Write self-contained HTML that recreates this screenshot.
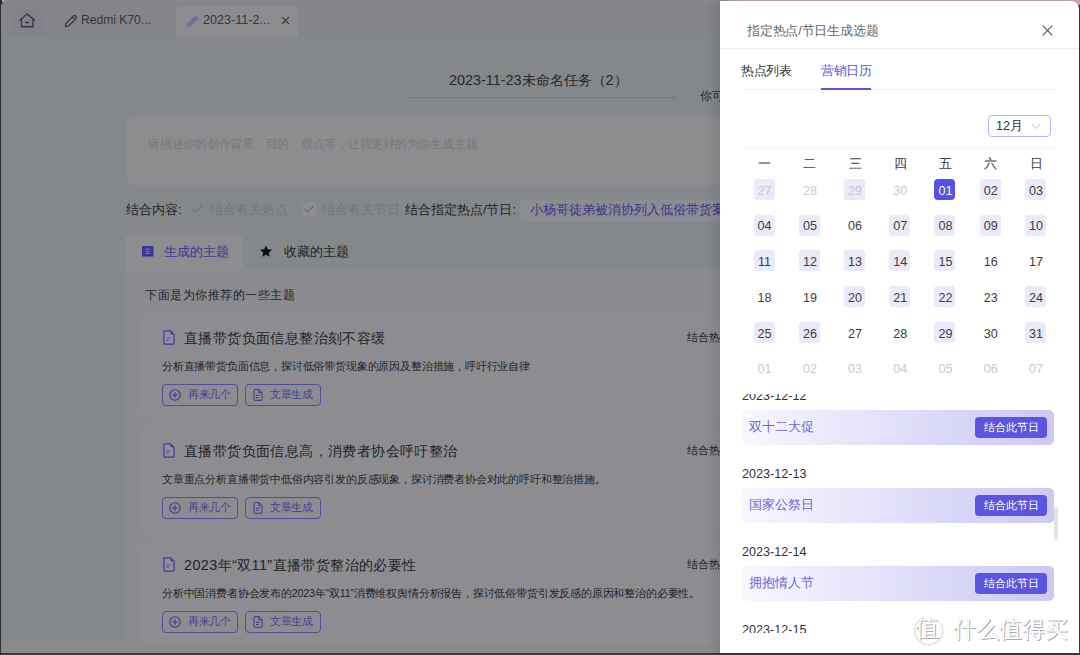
<!DOCTYPE html>
<html><head><meta charset="utf-8">
<style>
*{margin:0;padding:0;box-sizing:border-box}
html,body{width:1080px;height:655px;overflow:hidden;background:#3a3a3c;font-family:"Liberation Sans",sans-serif}
.abs{position:absolute}
.t{position:absolute;white-space:nowrap;line-height:1}
svg{position:absolute;overflow:visible}
</style></head><body>
<!-- outer frame -->
<div class="abs" style="left:0;top:0;width:1080px;height:2px;background:linear-gradient(90deg,#e0a0b8 0,#8e8690 8px,#8e8690 720px,#c0a8b4 740px,#c0a8b4 1070px,#e8a0b8 1080px)"></div>
<div class="abs" style="left:1074px;top:0;width:6px;height:5px;background:#d898b0"></div>
<div class="abs" style="left:0;top:0;width:1.5px;height:655px;background:#2e3033"></div>
<!-- left masked window -->
<div class="abs" id="left" style="left:1px;top:1px;width:719px;height:652px;background:#85888a;overflow:hidden;border-top-left-radius:6px">
  <!-- tab bar -->
  <div class="abs" style="left:0;top:0;width:719px;height:35px;background:#858488"></div>
  <div class="abs" style="left:11px;top:9px;width:32px;height:24px;border-radius:7px;background:#82828d"></div>
  <div class="abs" style="left:0;top:589px;width:124px;height:51px;background:#84878b"></div>
  <div class="abs" style="left:0;top:639px;width:719px;height:14px;background:#8a8a8c"></div>
  <div class="abs" style="left:175px;top:5px;width:122px;height:31px;border-radius:6px 6px 0 0;background:#8c8c8f"></div>
</div>
<div id="lt">
  <!-- home icon -->
  <svg style="left:18px;top:12px" width="18" height="17" viewBox="0 0 18 17"><path d="M2 8 L9.2 2 L16.4 8 M3.5 6.8 V14.7 H15 V6.8" fill="none" stroke="#34343c" stroke-width="1.35" stroke-linejoin="round" stroke-linecap="round"/><path d="M7.3 10.3 Q9.2 12.3 11.1 10.3 Z" fill="#34343c" stroke="#34343c" stroke-width="0.8"/></svg>
  <!-- pencil -->
  <svg style="left:64px;top:14px" width="14" height="14" viewBox="0 0 14 14"><path d="M1.5 12.5 L1.8 9.6 L9.6 1.8 Q10.4 1.1 11.2 1.8 L12.2 2.8 Q12.9 3.6 12.2 4.4 L4.4 12.2 Z M8.4 3 L11 5.6" fill="none" stroke="#3a3a42" stroke-width="1.3" stroke-linejoin="round"/></svg>
  <div class="t" style="left:81px;top:14px;font-size:12.1px;color:#36363c">Redmi K70...</div>
  <svg style="left:186px;top:15px" width="13" height="12" viewBox="0 0 13 12"><path d="M1.5 11 L1.8 8.4 L8.6 1.6 Q9.4 0.9 10.2 1.6 L11.2 2.6 Q11.9 3.4 11.2 4.2 L4.2 11 Z" fill="#73708f" stroke="#73708f" stroke-width="1"/></svg>
  <div class="t" style="left:203px;top:14px;font-size:12.6px;color:#36363c">2023-11-2...</div>
  <svg style="left:281px;top:16px" width="9" height="9" viewBox="0 0 9 9"><path d="M1 1 L8 8 M8 1 L1 8" stroke="#3a3a40" stroke-width="1.2"/></svg>
  <!-- title -->
  <div class="t" style="left:449px;top:73px;font-size:14.4px;color:#26262b">2023-11-23未命名任务（2）</div>
  <div class="abs" style="left:408px;top:97px;width:268px;height:1px;background:#76777b"></div>
  <div class="t" style="left:700px;top:91.2px;font-size:11.5px;color:#26262b">你可</div>
  <!-- textarea -->
  <div class="abs" style="left:126px;top:117px;width:600px;height:68px;border-radius:10px;background:#8d8d90"></div>
  <div class="t" style="left:148px;top:138px;font-size:12px;letter-spacing:-0.24px;color:#77777b">请描述你的创作背景、目的、观点等，让我更好的为你生成主题</div>
  <!-- checkbox row -->
  <div class="t" style="left:126px;top:204px;font-size:12.6px;color:#1f1f24">结合内容:</div>
  <svg style="left:191px;top:204px" width="12" height="10" viewBox="0 0 12 10"><path d="M1.5 5 L4.5 8 L10.5 2" fill="none" stroke="#737378" stroke-width="1.2"/></svg>
  <div class="t" style="left:210px;top:204px;font-size:12.6px;color:#75757a">结合有关热点</div>
  <div class="abs" style="left:302px;top:202px;width:15px;height:15px;border-radius:3px;background:#8e8e92;border:1px solid #8a8a8e"></div>
  <svg style="left:303px;top:204px" width="12" height="10" viewBox="0 0 12 10"><path d="M1.5 5 L4.5 8 L10.5 2" fill="none" stroke="#68686d" stroke-width="1.2"/></svg>
  <div class="t" style="left:322px;top:204px;font-size:12.6px;color:#75757a">结合有关节日</div>
  <div class="t" style="left:405px;top:204px;font-size:12.6px;color:#1f1f24">结合指定热点/节日:</div>
  <div class="abs" style="left:520px;top:199px;width:220px;height:23px;border-radius:4px;background:#8b8b92"></div>
  <div class="t" style="left:530px;top:204px;font-size:12.6px;color:#3d3590">小杨哥徒弟被消协列入低俗带货案例</div>

  <!-- tabs -->
    <div class="abs" style="left:125px;top:233px;width:118px;height:40px;border-radius:8px 8px 0 0;background:#8d8d90"></div>
  <div class="abs" style="left:125px;top:269px;width:600px;height:372px;background:#8b8b8f"></div>
  <svg style="left:142px;top:246px" width="11.5" height="10.5" viewBox="0 0 11.5 10.5"><rect x="0" y="0" width="11.5" height="10.5" fill="#3c3591"/><path d="M3 3H8.5 M3 5.25H8.5 M3 7.5H8.5 M5.75 2.2V8.3" stroke="#7e79b4" stroke-width="0.8"/></svg>
  <div class="t" style="left:164px;top:246px;font-size:12.6px;color:#3d3692">生成的主题</div>
  <svg style="left:259px;top:245px" width="14" height="13" viewBox="0 0 24 23"><path d="M12 1 L15.1 7.6 L22.5 8.5 L17 13.5 L18.5 20.8 L12 17.2 L5.5 20.8 L7 13.5 L1.5 8.5 L8.9 7.6 Z" fill="#111114"/></svg>
  <div class="t" style="left:284px;top:246px;font-size:12.6px;color:#222226">收藏的主题</div>
  <div class="t" style="left:145px;top:289px;font-size:12px;letter-spacing:0.5px;color:#222226">下面是为你推荐的一些主题</div>

  <div class="abs" style="left:140px;top:316px;width:600px;height:101px;border-radius:6px;background:#8d8d91"></div>
  <svg style="left:163px;top:330px" width="12" height="15" viewBox="0 0 12 15"><path d="M1 1.5 Q1 0.8 1.7 0.8 H7.5 L11 4.3 V13.3 Q11 14.1 10.3 14.1 H1.7 Q1 14.1 1 13.3 Z" fill="#9290a0" stroke="#3f3994" stroke-width="1.2" stroke-linejoin="round"/><path d="M7.5 0.8 L11 4.3 H7.5 Z" fill="#3f3994"/><path d="M3.3 8 H7.5 M3.3 10.3 H5.8" stroke="#4a4598" stroke-width="0.9"/></svg>
  <div class="t" style="left:184px;top:331px;font-size:14.4px;letter-spacing:0.4px;color:#222226">直播带货负面信息整治刻不容缓</div>
  <div class="t" style="left:162px;top:361px;font-size:10.63px;letter-spacing:-0.18px;color:#222226">分析直播带货负面信息，探讨低俗带货现象的原因及整治措施，呼吁行业自律</div>
  <div class="t" style="left:687px;top:332px;font-size:10.8px;color:#222226">结合热点</div>
  <div class="abs" style="left:162px;top:384px;width:76px;height:22px;border:1px solid #524c9e;border-radius:4px"></div>
  <svg style="left:169px;top:389px" width="12" height="12" viewBox="0 0 12 12"><circle cx="6" cy="6" r="5.2" fill="none" stroke="#3d3790" stroke-width="1.1"/><path d="M6 3.3V8.7 M3.3 6H8.7" stroke="#3d3790" stroke-width="1.1"/></svg>
  <div class="t" style="left:188px;top:389px;font-size:10.8px;letter-spacing:-0.3px;color:#443e94">再来几个</div>
  <div class="abs" style="left:245px;top:384px;width:76px;height:22px;border:1px solid #524c9e;border-radius:4px"></div>
  <svg style="left:253px;top:389px" width="10" height="12" viewBox="0 0 10 12"><path d="M1 1.3 Q1 0.6 1.6 0.6 H6 L9 3.6 V10.6 Q9 11.3 8.4 11.3 H1.6 Q1 11.3 1 10.6 Z M5.8 0.6 V3.8 H9 M3 6.3 H6.5 M3 8.5 H5.5" fill="none" stroke="#3d3790" stroke-width="1" stroke-linejoin="round"/></svg>
  <div class="t" style="left:270px;top:389px;font-size:10.8px;letter-spacing:-0.3px;color:#443e94">文章生成</div>

  <div class="abs" style="left:140px;top:429px;width:600px;height:101px;border-radius:6px;background:#8d8d91"></div>
  <svg style="left:163px;top:443px" width="12" height="15" viewBox="0 0 12 15"><path d="M1 1.5 Q1 0.8 1.7 0.8 H7.5 L11 4.3 V13.3 Q11 14.1 10.3 14.1 H1.7 Q1 14.1 1 13.3 Z" fill="#9290a0" stroke="#3f3994" stroke-width="1.2" stroke-linejoin="round"/><path d="M7.5 0.8 L11 4.3 H7.5 Z" fill="#3f3994"/><path d="M3.3 8 H7.5 M3.3 10.3 H5.8" stroke="#4a4598" stroke-width="0.9"/></svg>
  <div class="t" style="left:184px;top:444px;font-size:14.4px;letter-spacing:0.4px;color:#222226">直播带货负面信息高，消费者协会呼吁整治</div>
  <div class="t" style="left:162px;top:474px;font-size:10.63px;letter-spacing:-0.18px;color:#222226">文章重点分析直播带货中低俗内容引发的反感现象，探讨消费者协会对此的呼吁和整治措施。</div>
  <div class="t" style="left:687px;top:445px;font-size:10.8px;color:#222226">结合热点</div>
  <div class="abs" style="left:162px;top:497px;width:76px;height:22px;border:1px solid #524c9e;border-radius:4px"></div>
  <svg style="left:169px;top:502px" width="12" height="12" viewBox="0 0 12 12"><circle cx="6" cy="6" r="5.2" fill="none" stroke="#3d3790" stroke-width="1.1"/><path d="M6 3.3V8.7 M3.3 6H8.7" stroke="#3d3790" stroke-width="1.1"/></svg>
  <div class="t" style="left:188px;top:502px;font-size:10.8px;letter-spacing:-0.3px;color:#443e94">再来几个</div>
  <div class="abs" style="left:245px;top:497px;width:76px;height:22px;border:1px solid #524c9e;border-radius:4px"></div>
  <svg style="left:253px;top:502px" width="10" height="12" viewBox="0 0 10 12"><path d="M1 1.3 Q1 0.6 1.6 0.6 H6 L9 3.6 V10.6 Q9 11.3 8.4 11.3 H1.6 Q1 11.3 1 10.6 Z M5.8 0.6 V3.8 H9 M3 6.3 H6.5 M3 8.5 H5.5" fill="none" stroke="#3d3790" stroke-width="1" stroke-linejoin="round"/></svg>
  <div class="t" style="left:270px;top:502px;font-size:10.8px;letter-spacing:-0.3px;color:#443e94">文章生成</div>

  <div class="abs" style="left:140px;top:543px;width:600px;height:101px;border-radius:6px;background:#8d8d91"></div>
  <svg style="left:163px;top:557px" width="12" height="15" viewBox="0 0 12 15"><path d="M1 1.5 Q1 0.8 1.7 0.8 H7.5 L11 4.3 V13.3 Q11 14.1 10.3 14.1 H1.7 Q1 14.1 1 13.3 Z" fill="#9290a0" stroke="#3f3994" stroke-width="1.2" stroke-linejoin="round"/><path d="M7.5 0.8 L11 4.3 H7.5 Z" fill="#3f3994"/><path d="M3.3 8 H7.5 M3.3 10.3 H5.8" stroke="#4a4598" stroke-width="0.9"/></svg>
  <div class="t" style="left:184px;top:558px;font-size:14.4px;letter-spacing:0.4px;color:#222226">2023年“双11”直播带货整治的必要性</div>
  <div class="t" style="left:162px;top:588px;font-size:10.63px;letter-spacing:-0.18px;color:#222226">分析中国消费者协会发布的2023年“双11”消费维权舆情分析报告，探讨低俗带货引发反感的原因和整治的必要性。</div>
  <div class="t" style="left:687px;top:559px;font-size:10.8px;color:#222226">结合热点</div>
  <div class="abs" style="left:162px;top:611px;width:76px;height:22px;border:1px solid #524c9e;border-radius:4px"></div>
  <svg style="left:169px;top:616px" width="12" height="12" viewBox="0 0 12 12"><circle cx="6" cy="6" r="5.2" fill="none" stroke="#3d3790" stroke-width="1.1"/><path d="M6 3.3V8.7 M3.3 6H8.7" stroke="#3d3790" stroke-width="1.1"/></svg>
  <div class="t" style="left:188px;top:616px;font-size:10.8px;letter-spacing:-0.3px;color:#443e94">再来几个</div>
  <div class="abs" style="left:245px;top:611px;width:76px;height:22px;border:1px solid #524c9e;border-radius:4px"></div>
  <svg style="left:253px;top:616px" width="10" height="12" viewBox="0 0 10 12"><path d="M1 1.3 Q1 0.6 1.6 0.6 H6 L9 3.6 V10.6 Q9 11.3 8.4 11.3 H1.6 Q1 11.3 1 10.6 Z M5.8 0.6 V3.8 H9 M3 6.3 H6.5 M3 8.5 H5.5" fill="none" stroke="#3d3790" stroke-width="1" stroke-linejoin="round"/></svg>
  <div class="t" style="left:270px;top:616px;font-size:10.8px;letter-spacing:-0.3px;color:#443e94">文章生成</div>
</div>
<!-- drawer -->
<div class="abs" id="drawer" style="left:720px;top:1px;width:358.5px;height:652px;background:#fff;border-top-right-radius:8px;overflow:hidden;box-shadow:-5px 0 12px rgba(0,0,0,0.11)">
  <div class="t" style="left:27px;top:23.5px;font-size:12.6px;letter-spacing:-0.17px;color:#666">指定热点/节日生成选题</div>

  <svg style="left:321.5px;top:23.5px" width="11" height="11" viewBox="0 0 11 11"><path d="M0.7 0.7 L10.3 10.3 M10.3 0.7 L0.7 10.3" stroke="#555" stroke-width="1.15"/></svg>
  <div class="abs" style="left:0;top:47px;width:359px;height:1px;background:#ececf0"></div>
  <div class="t" style="left:21px;top:63.5px;font-size:12.6px;letter-spacing:-0.45px;color:#333">热点列表</div>
  <div class="t" style="left:101px;top:63.5px;font-size:12.6px;letter-spacing:-0.45px;color:#5b54e0">营销日历</div>
  <div class="abs" style="left:22px;top:88px;width:313px;height:1px;background:#f0f0f4"></div>
  <div class="abs" style="left:101px;top:87px;width:50px;height:2px;background:#5b54e0"></div>
  <div class="abs" style="left:268px;top:114px;width:63px;height:22px;border:1px solid #b9b4fa;border-radius:4px"></div>
  <div class="t" style="left:276px;top:119px;font-size:12.6px;color:#333">12月</div>
  <svg style="left:311px;top:122px" width="10" height="7" viewBox="0 0 10 7"><path d="M1 1 L5 5.5 L9 1" fill="none" stroke="#c4c4cc" stroke-width="1"/></svg>
  <div class="abs" style="left:24px;top:146px;width:311px;height:1px;background:#f4f4f7"></div>
  <div class="t" style="left:34.5px;top:157px;width:20px;text-align:center;font-size:12.6px;color:#3d3d3d">一</div>
  <div class="t" style="left:79.89999999999998px;top:157px;width:20px;text-align:center;font-size:12.6px;color:#3d3d3d">二</div>
  <div class="t" style="left:125px;top:157px;width:20px;text-align:center;font-size:12.6px;color:#3d3d3d">三</div>
  <div class="t" style="left:170.20000000000005px;top:157px;width:20px;text-align:center;font-size:12.6px;color:#3d3d3d">四</div>
  <div class="t" style="left:215.39999999999998px;top:157px;width:20px;text-align:center;font-size:12.6px;color:#3d3d3d">五</div>
  <div class="t" style="left:260.79999999999995px;top:157px;width:20px;text-align:center;font-size:12.6px;color:#3d3d3d">六</div>
  <div class="t" style="left:306px;top:157px;width:20px;text-align:center;font-size:12.6px;color:#3d3d3d">日</div>
  <div class="abs" style="left:33.5px;top:178.2px;width:21px;height:21px;border-radius:3px;background:#ebeafa"></div>
  <div class="t" style="left:29.5px;top:183.7px;width:30px;text-align:center;font-size:12.6px;color:#c8c8ce">27</div>
  <div class="t" style="left:74.89999999999998px;top:183.7px;width:30px;text-align:center;font-size:12.6px;color:#c8c8ce">28</div>
  <div class="abs" style="left:124px;top:178.2px;width:21px;height:21px;border-radius:3px;background:#ebeafa"></div>
  <div class="t" style="left:120px;top:183.7px;width:30px;text-align:center;font-size:12.6px;color:#c8c8ce">29</div>
  <div class="t" style="left:165.20000000000005px;top:183.7px;width:30px;text-align:center;font-size:12.6px;color:#c8c8ce">30</div>
  <div class="abs" style="left:214.4px;top:178.2px;width:21px;height:21px;border-radius:4px;background:#5552e6"></div>
  <div class="t" style="left:210.39999999999998px;top:183.7px;width:30px;text-align:center;font-size:12.6px;color:#fff">01</div>
  <div class="abs" style="left:259.8px;top:178.2px;width:21px;height:21px;border-radius:3px;background:#ebeafa"></div>
  <div class="t" style="left:255.79999999999995px;top:183.7px;width:30px;text-align:center;font-size:12.6px;color:#3d3d3d">02</div>
  <div class="abs" style="left:305px;top:178.2px;width:21px;height:21px;border-radius:3px;background:#ebeafa"></div>
  <div class="t" style="left:301px;top:183.7px;width:30px;text-align:center;font-size:12.6px;color:#3d3d3d">03</div>
  <div class="abs" style="left:33.5px;top:213.5px;width:21px;height:21px;border-radius:3px;background:#ebeafa"></div>
  <div class="t" style="left:29.5px;top:219px;width:30px;text-align:center;font-size:12.6px;color:#3d3d3d">04</div>
  <div class="abs" style="left:78.9px;top:213.5px;width:21px;height:21px;border-radius:3px;background:#ebeafa"></div>
  <div class="t" style="left:74.89999999999998px;top:219px;width:30px;text-align:center;font-size:12.6px;color:#3d3d3d">05</div>
  <div class="t" style="left:120px;top:219px;width:30px;text-align:center;font-size:12.6px;color:#3d3d3d">06</div>
  <div class="abs" style="left:169.2px;top:213.5px;width:21px;height:21px;border-radius:3px;background:#ebeafa"></div>
  <div class="t" style="left:165.20000000000005px;top:219px;width:30px;text-align:center;font-size:12.6px;color:#3d3d3d">07</div>
  <div class="abs" style="left:214.4px;top:213.5px;width:21px;height:21px;border-radius:3px;background:#ebeafa"></div>
  <div class="t" style="left:210.39999999999998px;top:219px;width:30px;text-align:center;font-size:12.6px;color:#3d3d3d">08</div>
  <div class="abs" style="left:259.8px;top:213.5px;width:21px;height:21px;border-radius:3px;background:#ebeafa"></div>
  <div class="t" style="left:255.79999999999995px;top:219px;width:30px;text-align:center;font-size:12.6px;color:#3d3d3d">09</div>
  <div class="abs" style="left:305px;top:213.5px;width:21px;height:21px;border-radius:3px;background:#ebeafa"></div>
  <div class="t" style="left:301px;top:219px;width:30px;text-align:center;font-size:12.6px;color:#3d3d3d">10</div>
  <div class="abs" style="left:33.5px;top:249.4px;width:21px;height:21px;border-radius:3px;background:#ebeafa"></div>
  <div class="t" style="left:29.5px;top:254.9px;width:30px;text-align:center;font-size:12.6px;color:#3d3d3d">11</div>
  <div class="abs" style="left:78.9px;top:249.4px;width:21px;height:21px;border-radius:3px;background:#ebeafa"></div>
  <div class="t" style="left:74.89999999999998px;top:254.9px;width:30px;text-align:center;font-size:12.6px;color:#3d3d3d">12</div>
  <div class="abs" style="left:124px;top:249.4px;width:21px;height:21px;border-radius:3px;background:#ebeafa"></div>
  <div class="t" style="left:120px;top:254.9px;width:30px;text-align:center;font-size:12.6px;color:#3d3d3d">13</div>
  <div class="abs" style="left:169.2px;top:249.4px;width:21px;height:21px;border-radius:3px;background:#ebeafa"></div>
  <div class="t" style="left:165.20000000000005px;top:254.9px;width:30px;text-align:center;font-size:12.6px;color:#3d3d3d">14</div>
  <div class="abs" style="left:214.4px;top:249.4px;width:21px;height:21px;border-radius:3px;background:#ebeafa"></div>
  <div class="t" style="left:210.39999999999998px;top:254.9px;width:30px;text-align:center;font-size:12.6px;color:#3d3d3d">15</div>
  <div class="t" style="left:255.79999999999995px;top:254.9px;width:30px;text-align:center;font-size:12.6px;color:#3d3d3d">16</div>
  <div class="t" style="left:301px;top:254.9px;width:30px;text-align:center;font-size:12.6px;color:#3d3d3d">17</div>
  <div class="t" style="left:29.5px;top:290.5px;width:30px;text-align:center;font-size:12.6px;color:#3d3d3d">18</div>
  <div class="t" style="left:74.89999999999998px;top:290.5px;width:30px;text-align:center;font-size:12.6px;color:#3d3d3d">19</div>
  <div class="abs" style="left:124px;top:285px;width:21px;height:21px;border-radius:3px;background:#ebeafa"></div>
  <div class="t" style="left:120px;top:290.5px;width:30px;text-align:center;font-size:12.6px;color:#3d3d3d">20</div>
  <div class="abs" style="left:169.2px;top:285px;width:21px;height:21px;border-radius:3px;background:#ebeafa"></div>
  <div class="t" style="left:165.20000000000005px;top:290.5px;width:30px;text-align:center;font-size:12.6px;color:#3d3d3d">21</div>
  <div class="abs" style="left:214.4px;top:285px;width:21px;height:21px;border-radius:3px;background:#ebeafa"></div>
  <div class="t" style="left:210.39999999999998px;top:290.5px;width:30px;text-align:center;font-size:12.6px;color:#3d3d3d">22</div>
  <div class="t" style="left:255.79999999999995px;top:290.5px;width:30px;text-align:center;font-size:12.6px;color:#3d3d3d">23</div>
  <div class="abs" style="left:305px;top:285px;width:21px;height:21px;border-radius:3px;background:#ebeafa"></div>
  <div class="t" style="left:301px;top:290.5px;width:30px;text-align:center;font-size:12.6px;color:#3d3d3d">24</div>
  <div class="abs" style="left:33.5px;top:321px;width:21px;height:21px;border-radius:3px;background:#ebeafa"></div>
  <div class="t" style="left:29.5px;top:326.5px;width:30px;text-align:center;font-size:12.6px;color:#3d3d3d">25</div>
  <div class="abs" style="left:78.9px;top:321px;width:21px;height:21px;border-radius:3px;background:#ebeafa"></div>
  <div class="t" style="left:74.89999999999998px;top:326.5px;width:30px;text-align:center;font-size:12.6px;color:#3d3d3d">26</div>
  <div class="t" style="left:120px;top:326.5px;width:30px;text-align:center;font-size:12.6px;color:#3d3d3d">27</div>
  <div class="t" style="left:165.20000000000005px;top:326.5px;width:30px;text-align:center;font-size:12.6px;color:#3d3d3d">28</div>
  <div class="abs" style="left:214.4px;top:321px;width:21px;height:21px;border-radius:3px;background:#ebeafa"></div>
  <div class="t" style="left:210.39999999999998px;top:326.5px;width:30px;text-align:center;font-size:12.6px;color:#3d3d3d">29</div>
  <div class="t" style="left:255.79999999999995px;top:326.5px;width:30px;text-align:center;font-size:12.6px;color:#3d3d3d">30</div>
  <div class="abs" style="left:305px;top:321px;width:21px;height:21px;border-radius:3px;background:#ebeafa"></div>
  <div class="t" style="left:301px;top:326.5px;width:30px;text-align:center;font-size:12.6px;color:#3d3d3d">31</div>
  <div class="t" style="left:29.5px;top:361.8px;width:30px;text-align:center;font-size:12.6px;color:#c8c8ce">01</div>
  <div class="t" style="left:74.89999999999998px;top:361.8px;width:30px;text-align:center;font-size:12.6px;color:#c8c8ce">02</div>
  <div class="t" style="left:120px;top:361.8px;width:30px;text-align:center;font-size:12.6px;color:#c8c8ce">03</div>
  <div class="t" style="left:165.20000000000005px;top:361.8px;width:30px;text-align:center;font-size:12.6px;color:#c8c8ce">04</div>
  <div class="t" style="left:210.39999999999998px;top:361.8px;width:30px;text-align:center;font-size:12.6px;color:#c8c8ce">05</div>
  <div class="t" style="left:255.79999999999995px;top:361.8px;width:30px;text-align:center;font-size:12.6px;color:#c8c8ce">06</div>
  <div class="t" style="left:301px;top:361.8px;width:30px;text-align:center;font-size:12.6px;color:#c8c8ce">07</div>
  <div class="abs" style="left:0;top:392.5px;width:359px;height:239.5px;overflow:hidden">
    <div class="t" style="left:22px;top:-4px;font-size:12.6px;color:#333">2023-12-12</div>
    <div class="abs" style="left:22px;top:16.5px;width:312px;height:35px;border-radius:5px;background:linear-gradient(90deg,#f7f7fe,#dcdaf8 60%,#cdc9f4)"></div>
    <div class="t" style="left:29px;top:27px;font-size:12.6px;color:#6b62e0">双十二大促</div>
    <div class="abs" style="left:255px;top:23.5px;width:72px;height:21px;border-radius:4px;background:#5b55e0"></div>
    <div class="t" style="left:264px;top:28.5px;font-size:10.8px;color:#fff;font-weight:500">结合此节日</div>
    <div class="t" style="left:22px;top:74px;font-size:12.6px;color:#333">2023-12-13</div>
    <div class="abs" style="left:22px;top:94.5px;width:312px;height:35px;border-radius:5px;background:linear-gradient(90deg,#f7f7fe,#dcdaf8 60%,#cdc9f4)"></div>
    <div class="t" style="left:29px;top:105px;font-size:12.6px;color:#6b62e0">国家公祭日</div>
    <div class="abs" style="left:255px;top:101.5px;width:72px;height:21px;border-radius:4px;background:#5b55e0"></div>
    <div class="t" style="left:264px;top:106.5px;font-size:10.8px;color:#fff;font-weight:500">结合此节日</div>
    <div class="t" style="left:22px;top:152px;font-size:12.6px;color:#333">2023-12-14</div>
    <div class="abs" style="left:22px;top:172.5px;width:312px;height:35px;border-radius:5px;background:linear-gradient(90deg,#f7f7fe,#dcdaf8 60%,#cdc9f4)"></div>
    <div class="t" style="left:29px;top:183px;font-size:12.6px;color:#6b62e0">拥抱情人节</div>
    <div class="abs" style="left:255px;top:179.5px;width:72px;height:21px;border-radius:4px;background:#5b55e0"></div>
    <div class="t" style="left:264px;top:184.5px;font-size:10.8px;color:#fff;font-weight:500">结合此节日</div>
    <div class="t" style="left:22px;top:230px;font-size:12.6px;color:#333">2023-12-15</div>
  </div>
  <div class="abs" style="left:334px;top:506px;width:4px;height:33px;border-radius:2px;background:#e2e1ea"></div>
  <svg style="left:193px;top:613px" width="32" height="32" viewBox="0 0 32 32"><path d="M9 4.5 A14 14 0 1 0 27.5 9" fill="none" stroke="#d6d6d6" stroke-width="1.3"/><path d="M9 4.5 A14 14 0 1 0 27.5 9" fill="none" stroke="#fff" stroke-width="0.4"/></svg>
  <div class="t" style="left:195px;top:615px;font-size:24px;color:#fff;text-shadow:0.5px 0.5px 0.6px #aaa,-0.3px -0.3px 0.5px #c4c4c4">值</div>
  <div class="t" style="left:233px;top:617px;font-size:23px;color:#fff;text-shadow:0.5px 0.5px 0.6px #aaa,-0.3px -0.3px 0.5px #c4c4c4">什么值得买</div>
</div>
</body></html>
